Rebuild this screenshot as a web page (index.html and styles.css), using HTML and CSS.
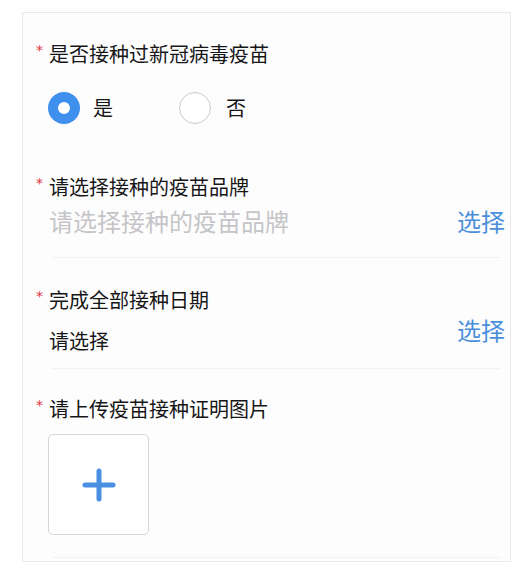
FILE: index.html
```html
<!DOCTYPE html>
<html lang="zh-CN">
<head>
<meta charset="utf-8">
<title>疫苗接种信息</title>
<link rel="stylesheet" href="styles.css">
</head>
<body>
<div class="card">
  <section class="field field-radio">
    <div class="label"><span class="req">*</span>是否接种过新冠病毒疫苗</div>
    <div class="radios">
      <div class="radio radio-on"><span class="dot"></span><span class="rtext">是</span></div>
      <div class="radio"><span class="dot"></span><span class="rtext">否</span></div>
    </div>
  </section>

  <section class="field field-brand">
    <div class="label"><span class="req">*</span>请选择接种的疫苗品牌</div>
    <div class="row row-brand">
      <span class="placeholder">请选择接种的疫苗品牌</span>
      <span class="pick">选择</span>
    </div>
    <div class="sep"></div>
  </section>

  <section class="field field-date">
    <div class="label"><span class="req">*</span>完成全部接种日期</div>
    <div class="row row-date">
      <span class="value">请选择</span>
      <span class="pick">选择</span>
    </div>
    <div class="sep"></div>
  </section>

  <section class="field field-upload">
    <div class="label"><span class="req">*</span>请上传疫苗接种证明图片</div>
    <div class="upload">
      <svg width="38" height="38" viewBox="0 0 38 38" aria-hidden="true">
        <path d="M19 5 V33 M5 19 H33" stroke="#4a8fe2" stroke-width="5" stroke-linecap="round" fill="none"/>
      </svg>
    </div>
    <div class="sep sep-last"></div>
  </section>
</div>
</body>
</html>
```

FILE: styles.css
```css
html, body {
  margin: 0;
  padding: 0;
  background: #ffffff;
}

body {
  font-family: "Noto Sans CJK SC", "Noto Sans", sans-serif;
  color: #1c1c1c;
}

.card {
  box-sizing: border-box;
  margin: 12px 0 0 22px;
  width: 489px;
  height: 550px;
  border: 1px solid #e9e9ea;
  background: #fefdfe;
  padding: 31px 5px 0 13px;
  display: flex;
  flex-direction: column;
}

.label {
  display: flex;
  align-items: flex-start;
  font-size: 20px;
  line-height: 20px;
  height: 20px;
  color: #161616;
}

.req {
  width: 13px;
  flex: none;
  color: #e0353b;
  font-size: 14px;
  line-height: 13px;
  font-family: "DejaVu Sans", sans-serif;
}

/* radio section */
.radios {
  display: flex;
  align-items: center;
  margin: 28px 0 0 12px;
  height: 32px;
}

.radio {
  display: flex;
  align-items: center;
  gap: 13px;
}

.radio + .radio {
  margin-left: 66px;
  gap: 15px;
}

.dot {
  box-sizing: border-box;
  width: 32px;
  height: 32px;
  border-radius: 50%;
  border: 1.5px solid #cbcacd;
  background: #fff;
}

.radio-on .dot {
  border: 10px solid #3f8fec;
  background: #ffffff;
}

.rtext {
  font-size: 20px;
  line-height: 20px;
  color: #161616;
}

.field-brand {
  margin-top: 53px;
}

.row {
  display: flex;
  justify-content: space-between;
  margin-left: 13px;
}

.row-brand {
  margin-top: 12px;
  align-items: center;
  height: 24px;
}

.placeholder {
  font-size: 24px;
  line-height: 24px;
  color: #c5c5c8;
}

.pick {
  font-size: 24px;
  line-height: 24px;
  color: #4a8fdb;
}

.sep {
  height: 1px;
  background: #f2f1f4;
  margin: 24px 4px 0 16px;
}

.field-date {
  margin-top: 32px;
}

.row-date {
  margin-top: 8px;
  height: 33px;
}

.row-date .value {
  align-self: flex-end;
  font-size: 20px;
  line-height: 20px;
  color: #161616;
}

.row-date .pick {
  align-self: flex-start;
}

.field-date .sep {
  margin-top: 17px;
}

.field-upload {
  margin-top: 30px;
}

.upload {
  box-sizing: border-box;
  margin: 15px 0 0 12px;
  width: 101px;
  height: 101px;
  border: 1.5px solid #d6d6d8;
  border-radius: 5px;
  background: #ffffff;
  display: flex;
  align-items: center;
  justify-content: center;
}

.sep-last {
  margin-top: 22px;
}
```
